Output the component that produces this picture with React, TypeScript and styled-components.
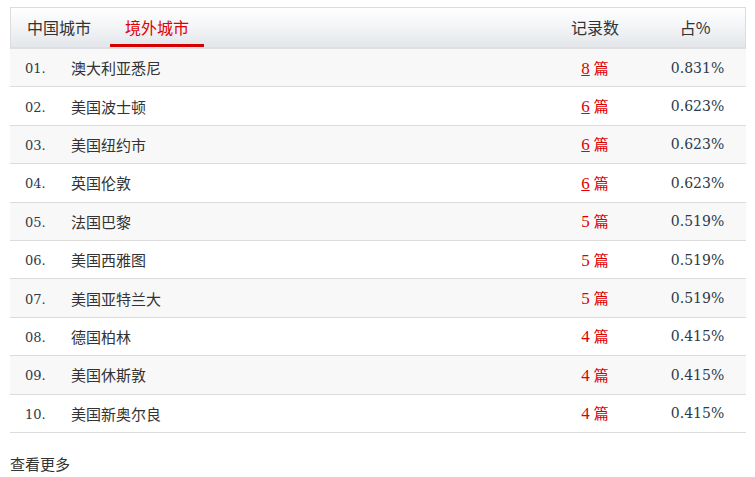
import styled, { createGlobalStyle } from 'styled-components'

const GlobalStyle = createGlobalStyle`
  html, body {
    margin: 0;
    padding: 0;
    background: #fff;
  }
  body {
    font-family: "Noto Sans CJK SC", "Liberation Sans", sans-serif;
    color: #333;
  }
`

const Page = styled.div`
  padding: 7px 0 0 10px;
  width: 736px;
`

const Table = styled.div`
  display: flex;
  flex-direction: column;
`

const Head = styled.div`
  display: grid;
  grid-template-columns: 1fr 100px 100px;
  height: 39px;
  border: 1px solid #dcdcdc;
  border-bottom: 2px solid #dddfe2;
  background: linear-gradient(to bottom, #ffffff 0%, #f4f5f7 45%, #e3e6ea 100%);
`

const Tabs = styled.div`
  display: flex;
  gap: 4px;
  padding-left: 1px;
`

const Tab = styled.div<{ $active?: boolean }>`
  position: relative;
  padding: 0 15px;
  font-size: 16px;
  line-height: 39px;
  color: ${({ $active }) => ($active ? '#e00000' : '#333')};
  &:after {
    content: '';
    display: ${({ $active }) => ($active ? 'block' : 'none')};
    position: absolute;
    left: 0;
    right: 0;
    bottom: 0;
    height: 3px;
    background: #d40000;
  }
`

const HeadCell = styled.div`
  font-size: 16px;
  line-height: 39px;
  text-align: center;
  color: #333;
`

const Row = styled.div<{ $odd: boolean }>`
  display: grid;
  grid-template-columns: 46px 1fr 100px 100px;
  align-items: center;
  height: 37.4px;
  padding-left: 15px;
  border-bottom: 1px solid #dcdcdc;
  background: ${({ $odd }) => ($odd ? '#f8f8f8' : '#fff')};
`

const Num = styled.span`
  font-family: "DejaVu Serif", "Liberation Serif", serif;
  font-size: 13px;
  color: #2d3a48;
  padding-top: 2px;
`

const Name = styled.span`
  font-size: 15px;
  color: #333;
`

const Count = styled.span`
  text-align: center;
  font-size: 15px;
  color: #e00000;
  padding-right: 2px;
`

const CountNum = styled.a<{ $link: boolean }>`
  font-family: "Liberation Serif", serif;
  font-size: 17px;
  color: #e00000;
  text-decoration: ${({ $link }) => ($link ? 'underline' : 'none')};
  margin-right: 4px;
`

const Pct = styled.span`
  text-align: center;
  font-family: "DejaVu Serif", "Liberation Serif", serif;
  font-size: 14px;
  color: #2d3a48;
  padding-left: 3px;
`

const More = styled.a`
  display: inline-block;
  margin-top: 20px;
  font-size: 15px;
  color: #333;
  text-decoration: none;
`

const rows = [
  ['澳大利亚悉尼', 8, '0.831%', true],
  ['美国波士顿', 6, '0.623%', true],
  ['美国纽约市', 6, '0.623%', true],
  ['英国伦敦', 6, '0.623%', true],
  ['法国巴黎', 5, '0.519%', false],
  ['美国西雅图', 5, '0.519%', false],
  ['美国亚特兰大', 5, '0.519%', false],
  ['德国柏林', 4, '0.415%', false],
  ['美国休斯敦', 4, '0.415%', false],
  ['美国新奥尔良', 4, '0.415%', false],
] as const

export default function App() {
  return (
    <Page>
      <GlobalStyle />
      <Table>
        <Head>
          <Tabs>
            <Tab>中国城市</Tab>
            <Tab $active>境外城市</Tab>
          </Tabs>
          <HeadCell>记录数</HeadCell>
          <HeadCell>占%</HeadCell>
        </Head>
        {rows.map(([name, count, pct, link], i) => (
          <Row key={name} $odd={i % 2 === 0}>
            <Num>{String(i + 1).padStart(2, '0')}.</Num>
            <Name>{name}</Name>
            <Count>
              <CountNum href={link ? '#' : undefined} $link={link}>
                {count}
              </CountNum>
              篇
            </Count>
            <Pct>{pct}</Pct>
          </Row>
        ))}
      </Table>
      <More href="#">查看更多</More>
    </Page>
  )
}
